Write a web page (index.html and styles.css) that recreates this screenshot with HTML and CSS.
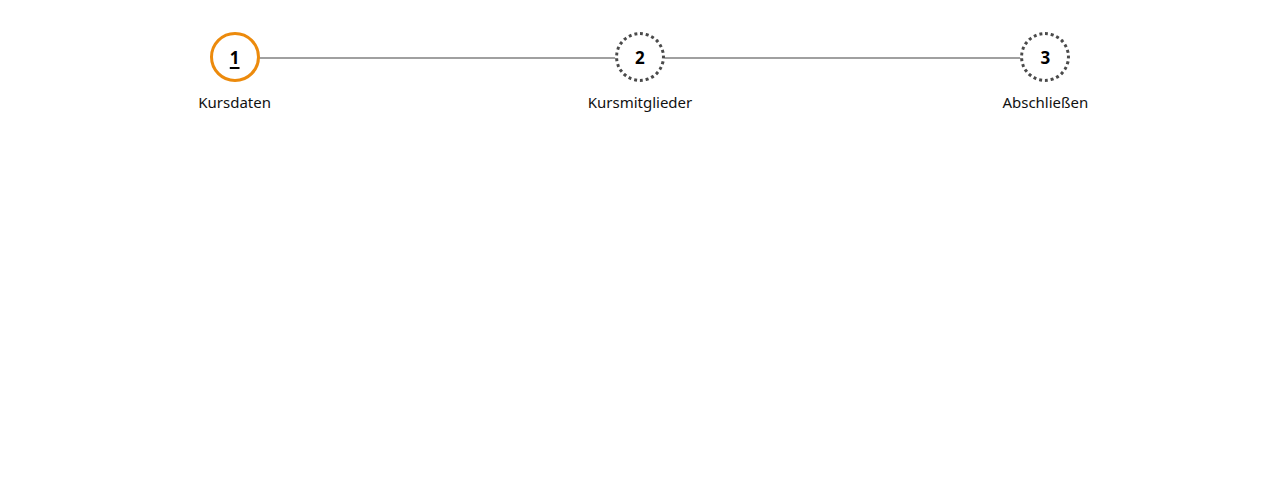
FILE: index.html
```html
<!DOCTYPE html>
<html lang="de">
<head>
<meta charset="utf-8">
<link rel="stylesheet" href="styles.css">
</head>
<body>
<ol class="steps">
  <li class="step step-active">
    <span class="circle"><span class="num">1</span></span>
    <span class="label">Kursdaten</span>
  </li>
  <li class="step">
    <span class="circle"><span class="num">2</span></span>
    <span class="label">Kursmitglieder</span>
  </li>
  <li class="step step-last">
    <span class="circle"><span class="num">3</span></span>
    <span class="label">Abschließen</span>
  </li>
</ol>
</body>
</html>
```
FILE: styles.css
```css
html, body {
  margin: 0;
  padding: 0;
  background: #fff;
}
body {
  font-family: "Noto Sans", "DejaVu Sans", sans-serif;
  color: #111;
}
.steps {
  list-style: none;
  margin: 0;
  padding: 32px 32px 0 32px;
  display: grid;
  grid-template-columns: repeat(3, 1fr);
}
.step {
  position: relative;
  display: flex;
  flex-direction: column;
  align-items: center;
}
.step::after {
  content: "";
  position: absolute;
  top: 25px;
  left: 50%;
  width: 100%;
  height: 2px;
  background: #a0a0a0;
  z-index: 0;
}
.step-last::after {
  display: none;
}
.circle {
  position: relative;
  z-index: 1;
  box-sizing: border-box;
  width: 50px;
  height: 50px;
  border-radius: 50%;
  border: 3px dotted #4a4a4a;
  background: #fff;
  display: flex;
  align-items: center;
  justify-content: center;
}
.step-active .circle {
  border: 3px solid #ec8a0c;
}
.num {
  font-weight: 700;
  font-size: 17px;
  line-height: 1;
  color: #000;
}
.step-active .num {
  text-decoration: underline;
  text-underline-offset: 3px;
  text-decoration-thickness: 2px;
}
.label {
  margin-top: 10px;
  font-size: 15px;
  line-height: 20px;
  color: #111;
}
```
